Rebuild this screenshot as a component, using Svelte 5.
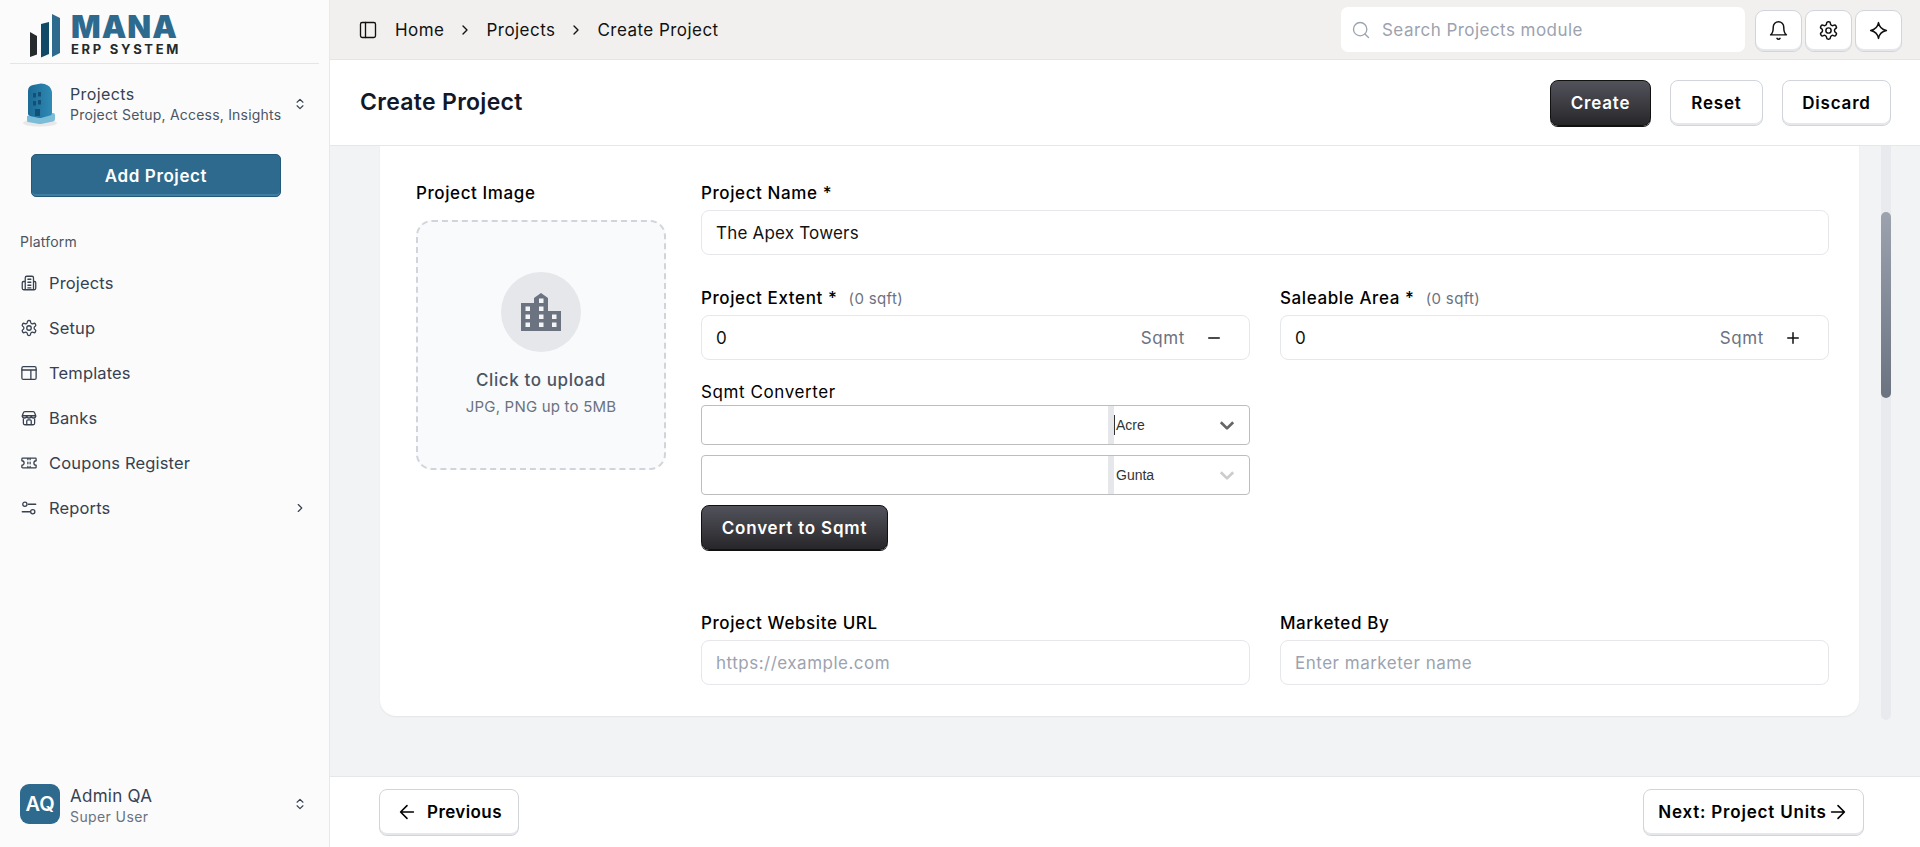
<script>
  const navItems = ['Projects', 'Setup', 'Templates', 'Banks', 'Coupons Register', 'Reports'];
  const gear = "M12.22 2h-.44a2 2 0 0 0-2 2v.18a2 2 0 0 1-1 1.73l-.43.25a2 2 0 0 1-2 0l-.15-.08a2 2 0 0 0-2.73.73l-.22.38a2 2 0 0 0 .73 2.73l.15.1a2 2 0 0 1 1 1.72v.51a2 2 0 0 1-1 1.74l-.15.09a2 2 0 0 0-.73 2.73l.22.38a2 2 0 0 0 2.73.73l.15-.08a2 2 0 0 1 2 0l.43.25a2 2 0 0 1 1 1.73V20a2 2 0 0 0 2 2h.44a2 2 0 0 0 2-2v-.18a2 2 0 0 1 1-1.73l.43-.25a2 2 0 0 1 2 0l.15.08a2 2 0 0 0 2.73-.73l.22-.39a2 2 0 0 0-.73-2.73l-.15-.08a2 2 0 0 1-1-1.74v-.5a2 2 0 0 1 1-1.74l.15-.09a2 2 0 0 0 .73-2.73l-.22-.38a2 2 0 0 0-2.73-.73l-.15.08a2 2 0 0 1-2 0l-.43-.25a2 2 0 0 1-1-1.73V4a2 2 0 0 0-2-2z";
</script>

{#snippet updown()}
  <svg class="updown" viewBox="0 0 24 24"><path d="m7 15 5 5 5-5M7 9l5-5 5 5"/></svg>
{/snippet}
{#snippet chev()}
  <svg class="crumb-chev" viewBox="0 0 24 24"><path d="m9 18 6-6-6-6"/></svg>
{/snippet}
{#snippet down()}
  <svg class="sel-chev" viewBox="0 0 16 16"><path d="M2.5 5.5 8 11l5.5-5.5"/></svg>
{/snippet}

<div class="app">
  <aside class="sidebar">
    <div class="logo">
      <svg class="logo-mark" viewBox="0 0 30 44">
        <polygon points="0,18 7,22 7,40.500 0,43" fill="#252a2c"/>
        <polygon points="11,10 19,8 19,40 11,43.500" fill="#114a66"/>
        <polygon points="22,0 30,4 30,39 22,43" fill="#2d6a8e"/>
      </svg>
      <div class="logo-text">
        <div class="mana">MANA</div>
        <div class="erp">ERP SYSTEM</div>
      </div>
    </div>

    <div class="switcher">
      <svg class="thumb" viewBox="0 0 40 46">
        <defs>
          <linearGradient id="bld" x1="0" x2="1" y1="0" y2="0">
            <stop offset="0" stop-color="#1c6a96"/><stop offset="1" stop-color="#2e8ab4"/>
          </linearGradient>
        </defs>
        <rect x="0" y="0" width="40" height="46" rx="8" fill="#fafafa"/>
        <ellipse cx="20" cy="42" rx="17" ry="3.500" fill="#e8e8e8"/>
        <path d="M7 35 L33 32 Q35 32 35 34 V38 Q35 40 33 40.500 L21 43 Q20 43.200 19 43 L8 41 Q7 40.800 7 39 Z" fill="#7bbcd8"/>
        <path d="M8 10 Q8 5 13 4 L21 2.500 Q29 3 31 8 Q32 10 32 12 V32 Q32 34 30 34.500 L21 37 Q20 37.200 19 37 L10 35 Q8 34.500 8 33 Z" fill="url(#bld)"/>
        <g fill="#135075">
          <rect x="13" y="12" width="3" height="4.500"/><rect x="18" y="11" width="3" height="4.500"/>
          <rect x="13" y="20" width="3" height="4.500"/><rect x="18" y="19" width="3" height="4.500"/>
          <rect x="15" y="28" width="5" height="7"/>
        </g>
      </svg>
      <div class="sw-text">
        <div class="sw-title">Projects</div>
        <div class="sw-sub">Project Setup, Access, Insights</div>
      </div>
      {@render updown()}
    </div>

    <div class="add-wrap"><button class="add">Add Project</button></div>

    <div class="platform">Platform</div>
    <nav class="nav">
      {#each navItems as item, i}
        <div class="nav-item">
          <svg class="nav-icon" viewBox="0 0 24 24">
            {#if i === 0}
              <path d="M7 21V5a2 2 0 0 1 2-2h7a2 2 0 0 1 2 2v16M7 10H4.500a1.500 1.500 0 0 0-1.500 1.500V19a2 2 0 0 0 2 2h14a2 2 0 0 0 2-2v-7.500a1.500 1.500 0 0 0-1.500-1.500H18M10.500 7h4M10.500 11h4M10.500 15h4M10.500 18.500h4"/>
            {:else if i === 1}
              <path d={gear}/><circle cx="12" cy="12" r="3"/>
            {:else if i === 2}
              <rect x="2.500" y="3.500" width="19" height="17" rx="2"/><path d="M2.500 8h19M14.500 8v12.500" />
            {:else if i === 3}
              <path d="M3 9l1.500-4a2 2 0 0 1 2-1.500h11a2 2 0 0 1 2 1.500L21 9v1a3 3 0 0 1-3 2 3 3 0 0 1-3-2 3 3 0 0 1-3 2 3 3 0 0 1-3-2 3 3 0 0 1-3 2 3 3 0 0 1-3-2zM3 9h18M4.500 12v7a2 2 0 0 0 2 2h11a2 2 0 0 0 2-2v-7M9 21v-5a1.500 1.500 0 0 1 1.500-1.500h3A1.500 1.500 0 0 1 15 16v5"/>
            {:else if i === 4}
              <path d="M2.500 9V6.500a1 1 0 0 1 1-1h17a1 1 0 0 1 1 1V9a3 3 0 0 0 0 6v2.500a1 1 0 0 1-1 1h-17a1 1 0 0 1-1-1V15a3 3 0 0 0 0-6zM10.500 5.500v2M13.500 5.500v2M10.500 11v2M13.500 11v2M10.500 16.500v2M13.500 16.500v2"/>
            {:else}
              <path d="M11 7h10M3 17h10"/><circle cx="6.500" cy="7" r="2.800"/><circle cx="17" cy="17" r="2.800"/>
            {/if}
          </svg>
          <span class="nav-label">{item}</span>
          {#if i === 5}{@render chev()}{/if}
        </div>
      {/each}
    </nav>

    <div class="user">
      <div class="avatar">AQ</div>
      <div class="sw-text user-text">
        <div class="user-name">Admin QA</div>
        <div class="user-role">Super User</div>
      </div>
      {@render updown()}
    </div>
  </aside>

  <div class="main">
    <header class="topbar">
      <svg class="panel" viewBox="0 0 24 24"><rect x="3" y="3" width="18" height="18" rx="2"/><path d="M9 3v18"/></svg>
      <span>Home</span>{@render chev()}<span>Projects</span>{@render chev()}<span>Create Project</span>
      <div class="search">
        <svg viewBox="0 0 24 24"><circle cx="11" cy="11" r="8"/><path d="m21 21-4.300-4.300"/></svg>
        <span>Search Projects module</span>
      </div>
      <div class="top-icons">
        <button class="icon-btn" aria-label="Notifications"><svg viewBox="0 0 24 24"><path d="M6 8a6 6 0 0 1 12 0c0 7 3 9 3 9H3s3-2 3-9"/><path d="M10.300 21a1.940 1.940 0 0 0 3.400 0"/></svg></button>
        <button class="icon-btn" aria-label="Settings"><svg viewBox="0 0 24 24"><path d={gear}/><circle cx="12" cy="12" r="3"/></svg></button>
        <button class="icon-btn" aria-label="Assistant"><svg viewBox="0 0 24 24"><path d="M12 3c.8 4.500 4 8 9 9-5 1-8.200 4.500-9 9-.8-4.500-4-8-9-9 5-1 8.200-4.500 9-9z"/></svg></button>
      </div>
    </header>

    <div class="titlebar">
      <h1>Create Project</h1>
      <div class="actions">
        <button class="btn dark">Create</button>
        <button class="btn reset">Reset</button>
        <button class="btn discard">Discard</button>
      </div>
    </div>

    <div class="scroller">
      <section class="card">
        <div class="image-col">
          <div class="label">Project Image</div>
          <div class="upload">
            <div class="circle">
              <svg viewBox="0 0 40 38" width="40" height="38">
                <path fill="#6b7280" d="M0 10h13V5l7-5 7 5v13h13v20H0z"/>
                <g fill="#f3f4f6">
                  <rect x="18" y="5.500" width="4.500" height="4.500"/>
                  <rect x="4.500" y="13.500" width="4.500" height="4.500"/><rect x="18" y="13.500" width="4.500" height="4.500"/>
                  <rect x="4.500" y="21.500" width="4.500" height="4.500"/><rect x="18" y="21.500" width="4.500" height="4.500"/><rect x="31" y="21.500" width="4.500" height="4.500"/>
                  <rect x="4.500" y="29.500" width="4.500" height="4.500"/><rect x="18" y="29.500" width="4.500" height="4.500"/><rect x="31" y="29.500" width="4.500" height="4.500"/>
                </g>
              </svg>
            </div>
            <div class="up-title">Click to upload</div>
            <div class="up-sub">JPG, PNG up to 5MB</div>
          </div>
        </div>

        <div class="form">
          <div class="field full">
            <div class="label">Project Name *</div>
            <input class="input" value="The Apex Towers" />
          </div>
          <div class="field">
            <div class="label">Project Extent * <small>(0 sqft)</small></div>
            <div class="input unit-input">
              <span class="val">0</span><span class="unit">Sqmt</span>
              <svg class="pm" viewBox="0 0 24 24"><path d="M5 12h14"/></svg>
            </div>
          </div>
          <div class="field">
            <div class="label">Saleable Area * <small>(0 sqft)</small></div>
            <div class="input unit-input">
              <span class="val">0</span><span class="unit">Sqmt</span>
              <svg class="pm" viewBox="0 0 24 24"><path d="M5 12h14M12 5v14"/></svg>
            </div>
          </div>
          <div class="field converter">
            <div class="label conv-label">Sqmt Converter</div>
            <div class="conv-row">
              <div class="conv-input"></div>
              <div class="conv-sel"><i class="caret"></i><span>Acre</span>{@render down()}</div>
            </div>
            <div class="conv-row faded">
              <div class="conv-input"></div>
              <div class="conv-sel"><span>Gunta</span>{@render down()}</div>
            </div>
            <button class="btn dark convert">Convert to Sqmt</button>
          </div>
          <div class="field"></div>
          <div class="field last">
            <div class="label">Project Website URL</div>
            <input class="input" placeholder="https://example.com" />
          </div>
          <div class="field last">
            <div class="label">Marketed By</div>
            <input class="input" placeholder="Enter marketer name" />
          </div>
        </div>
      </section>
      <div class="scroll-track"><div class="scroll-thumb"></div></div>
    </div>

    <footer class="footer">
      <button class="btn nav-btn prev"><svg viewBox="0 0 24 24"><path d="m12 19-7-7 7-7M19 12H5"/></svg>Previous</button>
      <button class="btn nav-btn next">Next: Project Units<svg viewBox="0 0 24 24"><path d="M5 12h14M12 5l7 7-7 7"/></svg></button>
    </footer>
  </div>
</div>

<style>
  :global(body) { margin: 0; font-family: Inter, "Noto Sans", sans-serif; color: #111; }
  svg { fill: none; stroke: currentColor; stroke-width: 2; stroke-linecap: round; stroke-linejoin: round; flex: none; display: block; }
  button { font-family: inherit; cursor: pointer; }

  .app { display: grid; grid-template-columns: 330px 1fr; height: 847px; overflow: hidden; }

  .sidebar { background: #fbfbfb; border-right: 1px solid #e7e8eb; display: flex; flex-direction: column; box-sizing: border-box; height: 847px; }
  .logo { height: 63px; margin: 0 10px; padding-left: 20px; border-bottom: 1px solid #e4e5e7; display: flex; gap: 12px; align-items: flex-start; }
  .logo-mark { width: 30px; height: 44px; margin-top: 14px; stroke: none; }
  .logo-text { margin-top: 12px; margin-left: -1px; }
  .mana { font-weight: 900; font-size: 31px; line-height: 30px; color: #2d6a8e; letter-spacing: 1px; }
  .erp { font-weight: 700; font-size: 13px; line-height: 14px; color: #252a2c; letter-spacing: 2.700px; white-space: nowrap; }

  .switcher { display: flex; align-items: center; padding: 17px 20px 0; gap: 10px; height: 46px; }
  .thumb { width: 40px; height: 46px; stroke: none; }
  .sw-text { flex: 1; min-width: 0; }
  .sw-title { font-size: 16px; line-height: 21px; color: #374151; letter-spacing: .4px; }
  .sw-sub { font-size: 14px; line-height: 19px; color: #4b5563; white-space: nowrap; letter-spacing: .2px; }
  .updown { width: 14px; height: 14px; color: #374151; margin-right: 2px; }

  .add-wrap { padding: 27px 48px 0 31px; }
  .add { width: 250px; height: 43px; background: #2d6a8e; border: 1px solid #25597a; box-shadow: inset 0 -2px 0 #3f7ea1; border-radius: 5px; color: #fff; font-size: 17px; font-weight: 600; letter-spacing: .6px; }

  .platform { margin: 36px 0 0 20px; font-size: 14px; line-height: 18px; color: #4b5563; letter-spacing: .2px; }
  .nav { margin-top: 9px; display: flex; flex-direction: column; }
  .nav-item { height: 45px; display: flex; align-items: center; padding: 0 20px; color: #374151; font-size: 16.500px; letter-spacing: .15px; }
  .nav-icon { width: 18px; height: 18px; margin-right: 11px; stroke-width: 1.700; }
  .nav-label { flex: 1; }
  .nav-item .crumb-chev { width: 14px; height: 14px; margin: 0 2px 0 0; }

  .user { margin-top: auto; display: flex; align-items: center; gap: 10px; padding: 0 20px 20px; }
  .user-text { padding-top: 4px; }
  .avatar { width: 40px; height: 40px; border-radius: 9px; background: #2d6a8e; color: #fff; font-weight: 600; font-size: 20px; display: flex; align-items: center; justify-content: center; }
  .user-name { font-size: 17px; line-height: 22px; color: #374151; letter-spacing: .25px; }
  .user-role { font-size: 14px; line-height: 20px; color: #6b7280; letter-spacing: .4px; }

  .main { display: flex; flex-direction: column; min-width: 0; height: 847px; }
  .topbar { height: 60px; box-sizing: border-box; background: #f1f0ee; border-bottom: 1px solid #e5e5e3; display: flex; align-items: center; padding: 0 18px 0 28px; font-size: 17px; letter-spacing: .46px; color: #111; }
  .panel { width: 20px; height: 20px; margin-right: 17px; stroke-width: 1.600; }
  .crumb-chev { width: 16px; height: 16px; margin: 0 13px; }
  .search { margin-left: auto; width: 404px; height: 45px; box-sizing: border-box; background: #fff; border-radius: 7px; display: flex; align-items: center; gap: 11px; padding-left: 10px; color: #9ca3af; }
  .search svg { width: 20px; height: 20px; stroke-width: 1.600; }
  .top-icons { display: flex; gap: 3px; margin-left: 10px; margin-top: 2px; }
  .icon-btn { width: 47px; height: 42px; background: #fff; border: 1px solid #d1d5db; border-radius: 9px; box-shadow: inset 0 -2px 0 #e5e7eb; display: flex; align-items: center; justify-content: center; padding: 0; color: #111; }
  .icon-btn svg { width: 21px; height: 21px; stroke-width: 1.700; }

  .titlebar { height: 86px; flex: none; box-sizing: border-box; background: #fff; border-bottom: 1px solid #e5e7eb; display: flex; align-items: center; padding: 0 29px 0 30px; justify-content: space-between; }
  h1 { margin: 0 0 2px; font-size: 23px; font-weight: 600; color: #111827; letter-spacing: .3px; }
  .actions { display: flex; gap: 19px; }
  .btn { height: 46px; box-sizing: border-box; background: #fff; border: 1px solid #d1d5db; border-radius: 8px; box-shadow: inset 0 -2px 0 #e5e7eb; font-size: 17px; font-weight: 600; color: #000; padding: 0; letter-spacing: .8px; }
  .btn.dark { background: linear-gradient(#52525b, #27272a); border-color: #111; box-shadow: 0 1px 0 #111; color: #fff; }
  .actions .dark { width: 101px; }
  .reset { width: 93px; }
  .discard { width: 109px; }

  .scroller { flex: 1; min-height: 0; background: #f2f3f5; position: relative; overflow: hidden; padding: 0 0 0 50px; }
  .card { width: 1479px; box-sizing: border-box; margin-top: -30px; height: 600px; background: #fff; border-radius: 16px; box-shadow: 0 1px 2px rgba(0,0,0,.06); display: flex; padding: 0 30px 0 36px; }
  .image-col { width: 250px; flex: none; margin-right: 35px; padding-top: 64px; }
  .label { font-size: 17px; font-weight: 500; line-height: 26px; color: #000; white-space: nowrap; letter-spacing: .6px; }
  .label small { font-size: 15px; font-weight: 400; color: #6b7280; margin-left: 6px; letter-spacing: .35px; }
  .upload { margin-top: 14px; width: 250px; height: 250px; box-sizing: border-box; border: 2px dashed #d1d5db; border-radius: 16px; background: #f9fafb; display: flex; flex-direction: column; align-items: center; padding-top: 50px; }
  .circle { width: 80px; height: 80px; border-radius: 50%; background: #e5e7eb; display: flex; align-items: center; justify-content: center; }
  .circle svg { stroke: none; }
  .up-title { margin-top: 16px; font-size: 17px; line-height: 24px; font-weight: 500; color: #4b5563; letter-spacing: .6px; }
  .up-sub { margin-top: 5px; font-size: 15px; line-height: 20px; color: #6b7280; letter-spacing: .2px; }

  .form { flex: 1; display: grid; grid-template-columns: 1fr 1fr; column-gap: 30px; align-content: start; padding-top: 64px; }
  .field { min-width: 0; }
  .full { grid-column: 1 / -1; margin-bottom: 30px; }
  .field > .label { margin-bottom: 3px; }
  .full > .label { margin-bottom: 4px; }
  .last > .label { margin-bottom: 4px; }
  .input { width: 100%; height: 45px; box-sizing: border-box; border: 1px solid #e5e7eb; border-radius: 8px; padding: 0 14px; font: 400 17px Inter, sans-serif; letter-spacing: .2px; color: #111; outline: none; background: #fff; display: block; }
  .input::placeholder { color: #9ca3af; opacity: 1; letter-spacing: .5px; }
  .unit-input { display: flex; align-items: center; }
  .val { flex: 1; }
  .unit { color: #6b7280; margin-right: 20px; letter-spacing: .6px; }
  .pm { width: 18px; height: 18px; margin-right: 12px; }

  .converter { margin-top: 19px; margin-bottom: 60px; }
  .converter .conv-label { margin-bottom: 0; font-weight: 400; }
  .conv-row { display: flex; height: 40px; box-sizing: border-box; border: 1px solid #bdbdbd; border-radius: 4px; margin-bottom: 10px; font: 14px "Liberation Sans", Arial, sans-serif; color: #333; overflow: hidden; }
  .conv-input { width: 406px; border-right: 6px solid #e5e7eb; }
  .conv-sel { flex: 1; display: flex; align-items: center; padding-left: 2px; position: relative; }
  .conv-sel span { flex: 1; }
  .caret { position: absolute; left: 0; top: 9px; width: 1px; height: 20px; background: #333; }
  .sel-chev { width: 18px; height: 18px; margin-right: 13px; stroke-width: 2.400; color: #666; stroke-linecap: butt; }
  .faded .sel-chev { color: #ccc; }
  .btn.convert { width: 187px; height: 45px; display: block; }

  .scroll-track { position: absolute; left: 1551px; top: 0; width: 10px; height: 574px; background: #e9eaed; border-radius: 0 0 5px 5px; }
  .scroll-thumb { position: absolute; top: 66px; left: 0; width: 10px; height: 186px; border-radius: 5px; background: linear-gradient(#9ca3af, #6b7280); }

  .footer { height: 71px; flex: none; box-sizing: border-box; background: #fff; border-top: 1px solid #e5e7eb; display: flex; align-items: center; justify-content: space-between; padding: 0 56px 0 49px; }
  .nav-btn { display: flex; align-items: center; justify-content: center; height: 47px; }
  .nav-btn svg { width: 22px; height: 22px; stroke-width: 1.700; }
  .prev { width: 140px; gap: 9px; letter-spacing: .4px; }
  .next { width: 221px; gap: 0; }
</style>
